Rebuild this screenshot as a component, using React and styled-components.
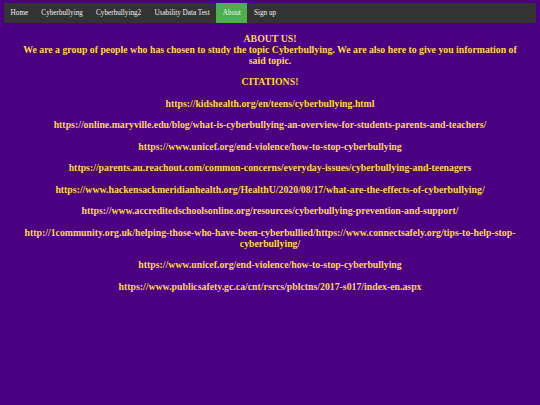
import React from 'react';
import styled, { createGlobalStyle } from 'styled-components';

const GlobalStyle = createGlobalStyle`
  html, body {
    margin: 0;
    padding: 0;
    background: #4b0082;
  }
  body {
    font-family: "Liberation Serif", "Times New Roman", serif;
  }
`;

const Page = styled.div`
  padding: 3px 4px 20px;
  min-height: 405px;
  box-sizing: border-box;
`;

const TopNav = styled.nav`
  display: flex;
  background: #333;
  height: 20px;
`;

const NavLink = styled.a`
  display: flex;
  align-items: center;
  padding: 0 6.6px;
  font-size: 7.2px;
  color: #f2f2f2;
  text-decoration: none;
  background: ${(p) => (p.$active ? '#4caf50' : 'transparent')};
`;

const Content = styled.main`
  text-align: center;
  color: #ffd84a;
  font-weight: bold;
  font-size: 9.8px;
  line-height: 11px;
  padding: 0 10px;
`;

const Intro = styled.p`
  margin: 9.5px 0 10.5px;
`;

const Heading = styled.p`
  margin: 10.5px 0;
`;

const Citation = styled.p`
  margin: 10.5px 0;
`;

const links = [
  'https://kidshealth.org/en/teens/cyberbullying.html',
  'https://online.maryville.edu/blog/what-is-cyberbullying-an-overview-for-students-parents-and-teachers/',
  'https://www.unicef.org/end-violence/how-to-stop-cyberbullying',
  'https://parents.au.reachout.com/common-concerns/everyday-issues/cyberbullying-and-teenagers',
  'https://www.hackensackmeridianhealth.org/HealthU/2020/08/17/what-are-the-effects-of-cyberbullying/',
  'https://www.accreditedschoolsonline.org/resources/cyberbullying-prevention-and-support/',
  'http://1community.org.uk/helping-those-who-have-been-cyberbullied/https://www.connectsafely.org/tips-to-help-stop-cyberbullying/',
  'https://www.unicef.org/end-violence/how-to-stop-cyberbullying',
  'https://www.publicsafety.gc.ca/cnt/rsrcs/pblctns/2017-s017/index-en.aspx',
];

const navItems = ['Home', 'Cyberbullying', 'Cyberbullying2', 'Usability Data Test', 'About', 'Sign up'];

export default function App() {
  return (
    <Page>
      <GlobalStyle />
      <TopNav>
        {navItems.map((item) => (
          <NavLink key={item} href="#" $active={item === 'About'}>
            {item}
          </NavLink>
        ))}
      </TopNav>
      <Content>
        <Intro>
          ABOUT US!
          <br />
          We are a group of people who has chosen to study the topic Cyberbullying. We are also here to give you
          information of said topic.
        </Intro>
        <Heading>CITATIONS!</Heading>
        {links.map((link, i) => (
          <Citation key={i}>{link}</Citation>
        ))}
      </Content>
    </Page>
  );
}
